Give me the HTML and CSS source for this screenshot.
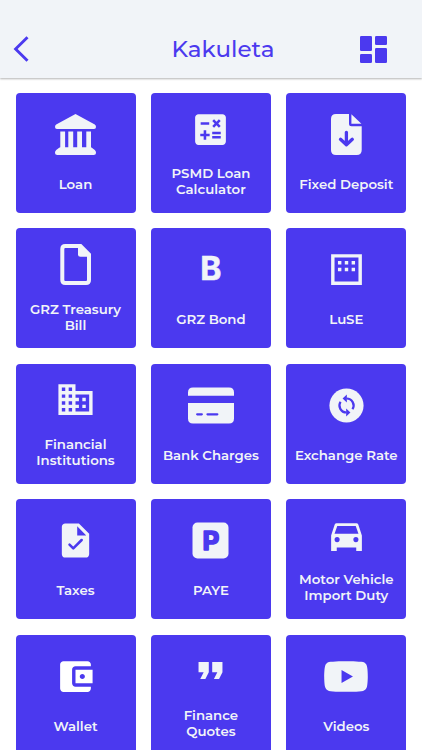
FILE: index.html
```html
<!DOCTYPE html>
<html lang="en">
<head>
    <meta charset="UTF-8">
    <meta name="viewport" content="width=device-width, initial-scale=1.0">
    <title>Kakuleta</title>
    <link rel="stylesheet" href="styles.css">
</head>
<body>
    <header class="header">
        <a href="#" class="back-link" aria-label="Back">
            <svg width="16" height="28" viewBox="0 0 16 28"><path d="M14.500 2.200 2.600 14 14.500 25.800" fill="none" stroke="currentColor" stroke-width="2.900"/></svg>
        </a>
        <h1 class="header-title">Kakuleta</h1>
        <a href="#" class="menu-link" aria-label="Dashboard">
            <svg width="27" height="27" viewBox="0 0 27 27">
                <rect width="12" height="15" rx="1.3"/>
                <rect x="15" width="12" height="9" rx="1.3"/>
                <rect x="15" y="12" width="12" height="15" rx="1.3"/>
                <rect y="18" width="12" height="9" rx="1.3"/>
            </svg>
        </a>
    </header>

    <main class="tile-grid">
        <a href="#" class="tile">
            <svg class="icon" viewBox="0 0 41 41"><path d="M20.5 0 39.8 10.6Q41 11.4 41 13q0 2-2 2H2q-2 0-2-2 0-1.600 1.200-2.400zM5.300 17.500h4.800v15.800h3.200V17.500h4.900v15.800h4V17.500h4.800v15.800h4.300V17.500H36v15.800q.4 0 .8.4l3 2.200q1.200 1 1.200 2.600 0 2.500-2.500 2.500h-36Q0 41 0 38.500q0-1.600 1.200-2.600l3-2.200q.5-.4 1.100-.4z"/></svg>
            <span class="tile-label">Loan</span>
        </a>
        <a href="#" class="tile">
            <svg class="icon" viewBox="0 0 24 24"><path d="M19 3H5c-1.100 0-2 .9-2 2v14c0 1.100.9 2 2 2h14c1.100 0 2-.9 2-2V5c0-1.100-.9-2-2-2zm-5.970 4.060L14.090 6l1.410 1.410L16.910 6l1.060 1.060-1.410 1.410 1.410 1.410-1.060 1.060-1.410-1.400-1.410 1.410-1.060-1.060 1.410-1.410-1.410-1.420zm-6.780.66h5v1.500h-5v-1.500zM11.500 16h-2v2H8v-2H6v-1.500h2v-2h1.500v2h2V16zm6.500 1.250h-5v-1.500h5v1.500zm0-2.500h-5v-1.500h5v1.500z"/></svg>
            <span class="tile-label">PSMD Loan<br>Calculator</span>
        </a>
        <a href="#" class="tile">
            <svg class="icon" viewBox="0 0 41 41">
                <path d="M10 0h13v9.800q0 2.500 2.500 2.500h10.200V36q0 5-5 5H10q-5 0-5-5V5q0-5 5-5zM25.400.3 35.400 9.800h-10z"/>
                <path class="cut-line" stroke-width="3.300" d="M20.400 18.300v12M14.500 25.300l5.900 5.500 5.900-5.500"/>
            </svg>
            <span class="tile-label">Fixed Deposit</span>
        </a>

        <a href="#" class="tile">
            <svg class="icon" viewBox="0 0 41 41">
                <path class="line" stroke-width="4" d="M10.300 2h15.200l8.500 8.500V36q0 3-3 3H10.300q-3 0-3-3V5q0-3 3-3z"/>
                <path d="M23 1h3l9 9v2.800H25.500q-2.500 0-2.500-2.500z"/>
            </svg>
            <span class="tile-label">GRZ Treasury<br>Bill</span>
        </a>
        <a href="#" class="tile">
            <svg class="icon" viewBox="0 0 41 41"><text class="letter-b" x="20.800" y="30.700">B</text></svg>
            <span class="tile-label">GRZ Bond</span>
        </a>
        <a href="#" class="tile">
            <svg class="icon" viewBox="0 0 24 24"><path fill-rule="evenodd" d="M3 3h18v18H3zM5 5v14h14V5zM7 7h2v2H7zM11 7h2v2h-2zM15 7h2v2h-2zM7 11h2v2H7zM11 11h2v2h-2zM15 11h2v2h-2z"/></svg>
            <span class="tile-label">LuSE</span>
        </a>

        <a href="#" class="tile">
            <svg class="icon" viewBox="0 0 24 24"><path d="M12 7V3H2v18h20V7H12zM6 19H4v-2h2v2zm0-4H4v-2h2v2zm0-4H4V9h2v2zm0-4H4V5h2v2zm4 12H8v-2h2v2zm0-4H8v-2h2v2zm0-4H8V9h2v2zm0-4H8V5h2v2zm10 12h-8v-2h2v-2h-2v-2h2v-2h-2V9h8v10zm-2-8h-2v2h2v-2zm0 4h-2v2h2v-2z"/></svg>
            <span class="tile-label">Financial<br>Institutions</span>
        </a>
        <a href="#" class="tile">
            <svg class="icon icon-wide" viewBox="0 0 46 41">
                <path d="M5 2.500h36q5 0 5 5v3.300H0V7.500q0-5 5-5zM0 18h46v15.500q0 5-5 5H5q-5 0-5-5z"/>
                <path class="cut-line" stroke-width="2.300" d="M9.200 29.300h4.600M19.500 29.300h9.800"/>
            </svg>
            <span class="tile-label">Bank Charges</span>
        </a>
        <a href="#" class="tile">
            <svg class="icon" viewBox="0 0 24 24">
                <circle cx="12" cy="12" r="10"/>
                <path class="cut-arc" d="M12 7.900a4.100 4.100 0 0 1 3.500 6.300M12 16.100a4.100 4.100 0 0 1-3.500-6.300"/>
                <path class="cut" d="M12.200 5.500v4.800L9.700 7.900zM11.800 13.700v4.800l2.500-2.400z"/>
            </svg>
            <span class="tile-label">Exchange Rate</span>
        </a>

        <a href="#" class="tile">
            <svg class="icon" viewBox="0 0 24 24">
                <path d="M14 2H6c-1.100 0-2 .9-2 2v16c0 1.100.9 2 2 2h12c1.100 0 2-.9 2-2V8zM13 3.700 18.300 9H13z"/>
                <path class="cut-line" stroke-width="1.500" d="m8.500 14.400 2.200 2.200 4.900-4.900"/>
            </svg>
            <span class="tile-label">Taxes</span>
        </a>
        <a href="#" class="tile">
            <svg class="icon" viewBox="0 0 41 41">
                <rect x="2.500" y="2.500" width="36" height="36" rx="5"/>
                <text class="letter-p" x="21" y="29.700">P</text>
            </svg>
            <span class="tile-label">PAYE</span>
        </a>
        <a href="#" class="tile">
            <svg class="icon" viewBox="0 0 24 24"><path fill-rule="evenodd" d="M6.200 4.800h11.600q.8 0 1.100.8L21 12v9h-3.300v-2H6.300v2H3v-9l2.100-6.400q.3-.8 1.100-.8zM6.600 6.500 5 11h14l-1.600-4.500zM6.500 12.900a1.500 1.500 0 1 0 0 3 1.500 1.500 0 0 0 0-3zM17.500 12.900a1.500 1.500 0 1 0 0 3 1.500 1.500 0 0 0 0-3z"/></svg>
            <span class="tile-label">Motor Vehicle<br>Import Duty</span>
        </a>

        <a href="#" class="tile">
            <svg class="icon icon-white" viewBox="0 0 24 24"><path d="M21 18v1c0 1.100-.9 2-2 2H5c-1.110 0-2-.9-2-2V5c0-1.100.89-2 2-2h14c1.100 0 2 .9 2 2v1h-9c-1.110 0-2 .9-2 2v8c0 1.100.89 2 2 2h9zm-9-2h10V8H12v8zm4-2.500c-.83 0-1.500-.67-1.500-1.500s.67-1.500 1.500-1.500 1.500.67 1.500 1.500-.67 1.500-1.500 1.500z"/></svg>
            <span class="tile-label">Wallet</span>
        </a>
        <a href="#" class="tile">
            <svg class="icon" viewBox="0 0 24 24"><path d="M6 17h3l2-4V7H5v6h3zm8 0h3l2-4V7h-6v6h3z"/></svg>
            <span class="tile-label">Finance<br>Quotes</span>
        </a>
        <a href="#" class="tile">
            <svg class="icon icon-wide" viewBox="0 0 576 512"><path d="M549.655 124.083c-6.281-23.650-24.787-42.276-48.284-48.597C458.781 64 288 64 288 64S117.220 64 74.629 75.486c-23.497 6.322-42.003 24.947-48.284 48.597-11.412 42.867-11.412 132.305-11.412 132.305s0 89.438 11.412 132.305c6.281 23.650 24.787 41.500 48.284 47.821C117.220 448 288 448 288 448s170.780 0 213.371-11.486c23.497-6.321 42.003-24.171 48.284-47.821 11.412-42.867 11.412-132.305 11.412-132.305s0-89.438-11.412-132.305zm-317.510 213.508V175.185l142.739 81.205-142.739 81.201z"/></svg>
            <span class="tile-label">Videos</span>
        </a>
    </main>
</body>
</html>
```
FILE: styles.css
```css
* {
    box-sizing: border-box;
}

body {
    margin: 0;
    height: 750px;
    overflow: hidden;
    background-color: #ffffff;
    font-family: 'Montserrat', 'Inter', sans-serif;
}

a {
    color: inherit;
    text-decoration: none;
}

/* Header */
.header {
    display: grid;
    grid-template-columns: 86px 1fr 62px;
    align-items: center;
    height: 78px;
    padding-top: 20px;
    background-color: #f1f4f8;
    color: #4b39ef;
    box-shadow: 0 1px 2px rgba(0, 0, 0, 0.3);
}

.back-link,
.menu-link {
    display: flex;
}

.back-link {
    padding-left: 13px;
}

.header-title {
    margin: 0;
    font-size: 23px;
    font-weight: 500;
    line-height: 28px;
    text-align: center;
}

.menu-link svg {
    fill: currentColor;
}

/* Tiles */
.tile-grid {
    display: grid;
    grid-template-columns: repeat(3, 120px);
    grid-auto-rows: 120px;
    gap: 15.4px;
    padding: 15px 15.5px;
}

.tile {
    display: flex;
    flex-direction: column;
    align-items: center;
    justify-content: space-evenly;
    border-radius: 4px;
    background-color: #4b39ef;
    color: #f1f4f8;
}

.tile-label {
    font-size: 13.3px;
    font-weight: 600;
    line-height: 16px;
    text-align: center;
    white-space: nowrap;
}

/* Icons */
.icon {
    width: 41px;
    height: 41px;
    fill: #f1f4f8;
}

.icon-wide {
    width: 46px;
}

.icon-white {
    fill: #ffffff;
}

.line {
    fill: none;
    stroke: #f1f4f8;
}

.cut {
    fill: #4b39ef;
}

.cut-line,
.cut-arc {
    fill: none;
    stroke: #4b39ef;
}

.cut-line {
    stroke-linecap: round;
    stroke-linejoin: round;
}

.cut-arc {
    stroke-width: 1.3;
}

.letter-b,
.letter-p {
    font-family: 'Inter', sans-serif;
    font-weight: 700;
    text-anchor: middle;
}

.letter-b {
    font-size: 32px;
    stroke: #f1f4f8;
    stroke-width: 0.6;
}

.letter-p {
    font-size: 26px;
    fill: #4b39ef;
    stroke: #4b39ef;
    stroke-width: 1.6;
    stroke-linejoin: round;
}
```
